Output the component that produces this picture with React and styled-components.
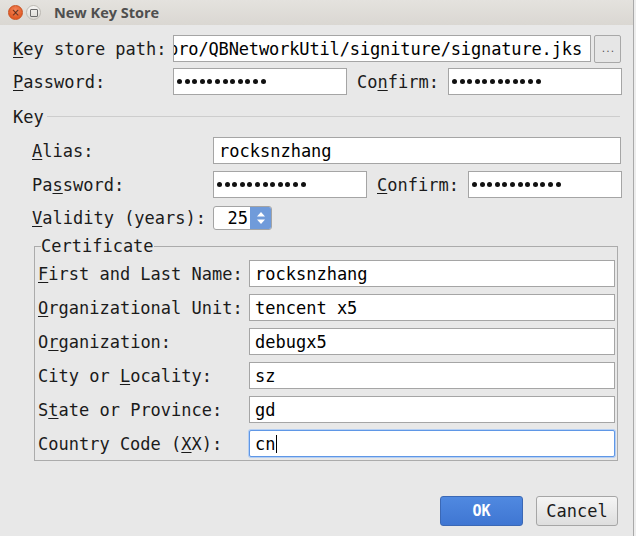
import styled, { createGlobalStyle } from "styled-components";

const Global = createGlobalStyle`
  html, body {
    margin: 0;
    padding: 0;
    background: #ededed;
  }
  body {
    font-family: "DejaVu Sans Mono", "Liberation Mono", monospace;
  }
  * { box-sizing: border-box; }
`

const Window = styled.div`
  width: 634px;
  height: 536px;
  display: flex;
  flex-direction: column;
  background: #e8e8e8;
  border-right: 1px solid #a9a9a9;
`

const TitleBar = styled.div`
  height: 25px;
  flex-shrink: 0;
  display: flex;
  align-items: center;
  padding-left: 8px;
  background: linear-gradient(#e4e2de, #dad7d2);
`

const CloseDot = styled.div`
  width: 15px;
  height: 15px;
  border-radius: 50%;
  background: radial-gradient(circle at 50% 35%, #f5895f, #e25a25 70%);
  border: 1px solid #c9501f;
  display: flex;
  align-items: center;
  justify-content: center;
  color: #5b2712;
  font-family: "DejaVu Sans", sans-serif;
  font-size: 10px;
  line-height: 1;
`

const MaxDot = styled.div`
  width: 15px;
  height: 15px;
  margin-left: 3px;
  border-radius: 50%;
  background: linear-gradient(#f6f5f3, #dcd9d4);
  border: 1px solid #bdbab4;
  display: flex;
  align-items: center;
  justify-content: center;

  &::after {
    content: "";
    width: 6px;
    height: 6px;
    border: 1px solid #6b6b6b;
    border-radius: 1px;
  }
`

const Title = styled.div`
  margin-left: 13px;
  font-family: "Open Sans", "Noto Sans", sans-serif;
  font-weight: bold;
  font-size: 14.5px;
  color: #4f4f4f;
`

const Content = styled.div`
  flex: 1;
  display: flex;
  flex-direction: column;
  padding: 10px 12px 10px 13px;
  font-size: 17px;
  color: #1b1b1b;
`

const Stack = styled.div`
  display: flex;
  flex-direction: column;
  gap: ${p => p.$gap}px;
  padding-left: ${p => p.$indent || 0}px;
`

const Row = styled.div`
  display: flex;
  align-items: center;
  height: ${p => p.$h || 27}px;
`

const Label = styled.div`
  width: ${p => p.$w}px;
  margin-left: ${p => p.$ml || 0}px;
  flex-shrink: 0;
  white-space: nowrap;
  font-size: 17px;
  line-height: 20px;
`

const Mn = styled.span`
  text-decoration: underline;
  text-underline-offset: 2px;
  text-decoration-thickness: 1px;
`

const Field = styled.div`
  height: 27px;
  ${p => (p.$w ? `width: ${p.$w}px; flex-shrink: 0;` : `flex: 1; min-width: 0;`)}
  display: flex;
  align-items: center;
  justify-content: ${p => (p.$end ? "flex-end" : "flex-start")};
  padding: ${p => (p.$end ? "0 8px 0 0" : "0 5px")};
  letter-spacing: ${p => (p.$end ? "-0.14px" : "normal")};
  background: #fff;
  border: 1px solid ${p => (p.$focus ? "#5f97e6" : "#a5a5a5")};
  border-radius: ${p => (p.$focus ? "2px" : "0")};
  box-shadow: ${p => (p.$focus ? "0 0 0 1px #b5cff3" : "none")};
  overflow: hidden;
  white-space: nowrap;
  font-size: 17px;
  color: #000;
`

const Mask = styled.div`
  display: flex;
  gap: 2.6px;
  margin-left: -2px;
`

const MaskDot = styled.span`
  width: 5px;
  height: 5px;
  border-radius: 50%;
  background: #111;
`

const Caret = styled.span`
  display: inline-block;
  width: 1px;
  height: 18px;
  background: #000;
  margin-left: 1px;
`

const BrowseButton = styled.div`
  width: 27px;
  height: 28px;
  margin-left: 3px;
  flex-shrink: 0;
  border: 1px solid #a8a8a8;
  border-radius: 2px;
  background: #e6e6e6;
  display: flex;
  align-items: center;
  justify-content: center;
  font-size: 9px;
  color: #555;
  letter-spacing: -1px;
`

const SectionHeader = styled.div`
  display: flex;
  align-items: center;
  height: 20px;
  margin-top: 12px;
  margin-bottom: 10px;

  &::after {
    content: "";
    flex: 1;
    height: 1px;
    margin: -1px 1px 0 3px;
    background: #cdcdcd;
  }
`

const Spinner = styled.div`
  width: 59px;
  height: 24px;
  display: flex;
  border: 1px solid #a4a4a4;
  border-radius: 3px;
  overflow: hidden;
  background: #fff;
`

const SpinValue = styled.div`
  flex: 1;
  display: flex;
  align-items: center;
  justify-content: flex-end;
  padding-right: 2px;
  font-size: 17px;
  color: #000;
`

const SpinArrows = styled.div`
  width: 21px;
  background: #709bda;
  display: flex;
  align-items: center;
  justify-content: center;
`

const CertBox = styled.fieldset`
  margin: 6px 3px 0 21px;
  padding: 4px 2px 3px 3px;
  border: 1px solid #ababab;
  min-width: 0;
`

const Legend = styled.legend`
  padding: 0;
  margin-left: 3px;
  font-size: 17px;
  line-height: 20px;
`

const ButtonRow = styled.div`
  margin-top: auto;
  display: flex;
  justify-content: flex-end;
  gap: 13px;
  padding-right: 3px;
`

const Button = styled.div`
  width: ${p => p.$w}px;
  height: 30px;
  display: flex;
  align-items: center;
  justify-content: center;
  border-radius: 3px;
  font-size: 17px;
  ${p => p.$primary ? `
    background: linear-gradient(#5089e0, #3f76d2);
    border: 1px solid #3b68b5;
    color: #fff;
    font-weight: bold;
    font-size: 15px;
  ` : `
    background: linear-gradient(#f5f5f5, #dedede);
    border: 1px solid #a6a6a6;
    color: #1b1b1b;
  `}
`

const PATH = "/home/rocksnzhang/AndroidStudioProjects/pro/QBNetworkUtil/signiture/signature.jks"

function Password() {
  return (
    <Mask>
      {Array.from({ length: 12 }, (_, i) => <MaskDot key={i} />)}
    </Mask>
  )
}

const certRows = [
  { label: <><Mn>F</Mn>irst and Last Name:</>, value: "rocksnzhang" },
  { label: <><Mn>O</Mn>rganizational Unit:</>, value: "tencent x5" },
  { label: <>O<Mn>r</Mn>ganization:</>, value: "debugx5" },
  { label: <>City or <Mn>L</Mn>ocality:</>, value: "sz" },
  { label: <>S<Mn>t</Mn>ate or Province:</>, value: "gd" },
  { label: <>Country Code (<Mn>X</Mn>X):</>, value: "cn", focus: true },
]

function App() {
  return (
    <>
      <Global />
      <Window>
        <TitleBar>
          <CloseDot>×</CloseDot>
          <MaxDot />
          <Title>New Key Store</Title>
        </TitleBar>
        <Content>
          <Stack $gap={6}>
            <Row>
              <Label $w={160}><Mn>K</Mn>ey store path:</Label>
              <Field $end>{PATH}</Field>
              <BrowseButton>...</BrowseButton>
            </Row>
            <Row>
              <Label $w={160}><Mn>P</Mn>assword:</Label>
              <Field $w={174}><Password /></Field>
              <Label $w={91} $ml={10}>Co<Mn>n</Mn>firm:</Label>
              <Field $w={174}><Password /></Field>
            </Row>
          </Stack>

          <SectionHeader>Key</SectionHeader>

          <Stack $gap={7} $indent={19}>
            <Row>
              <Label $w={181}><Mn>A</Mn>lias:</Label>
              <Field>rocksnzhang</Field>
            </Row>
            <Row>
              <Label $w={181}>Pa<Mn>s</Mn>sword:</Label>
              <Field $w={154}><Password /></Field>
              <Label $w={91} $ml={10}><Mn>C</Mn>onfirm:</Label>
              <Field $w={154}><Password /></Field>
            </Row>
            <Row $h={25}>
              <Label $w={181}><Mn>V</Mn>alidity (years):</Label>
              <Spinner>
                <SpinValue>25</SpinValue>
                <SpinArrows>
                  <svg width="10" height="16" viewBox="0 0 10 16">
                    <path d="M1 6.5 L5 2 L9 6.5 Z" fill="#fff" />
                    <path d="M1 9.5 L5 14 L9 9.5 Z" fill="#fff" />
                  </svg>
                </SpinArrows>
              </Spinner>
            </Row>
          </Stack>

          <CertBox>
            <Legend>Certificate</Legend>
            <Stack $gap={7}>
              {certRows.map((r, i) => (
                <Row key={i}>
                  <Label $w={211}>{r.label}</Label>
                  <Field $focus={r.focus}>
                    {r.value}
                    {r.focus && <Caret />}
                  </Field>
                </Row>
              ))}
            </Stack>
          </CertBox>

          <ButtonRow>
            <Button $w={83} $primary>OK</Button>
            <Button $w={82}>Cancel</Button>
          </ButtonRow>
        </Content>
      </Window>
    </>
  )
}

export default App
